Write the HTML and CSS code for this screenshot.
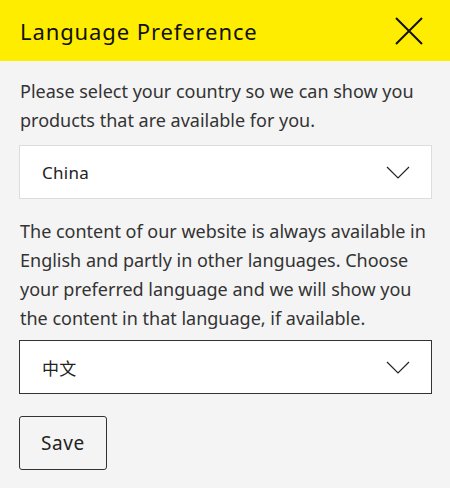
FILE: index.html
```html
<html>

<head>
  <meta charset="UTF-8">
  <meta name="viewport" content="width=device-width, initial-scale=1">
  <title>Language Preference</title>
  <link rel="stylesheet" href="styles.css">
</head>

<body>

  <div class="Modal">
    <header class="Cabecalho">
      <h1>Language Preference</h1>
      <button class="Fechar" title="Close">
        <svg width="28" height="28" viewBox="0 0 28 28">
          <path d="M1 1 L27 27 M27 1 L1 27" stroke="#111111" stroke-width="2" fill="none" />
        </svg>
      </button>
    </header>

    <div class="Conteudo">
      <p class="texto1">Please select your country so we can show you products that are available for you.</p>

      <div class="Seletor claro">
        <span>China</span>
        <svg width="24" height="13" viewBox="0 0 24 13">
          <path d="M1 1 L12 12 L23 1" stroke="#222222" stroke-width="1.2" fill="none" />
        </svg>
      </div>

      <p class="texto2">The content of our website is always available in English and partly in other languages. Choose your preferred language and we will show you the content in that language, if available.</p>

      <div class="Seletor escuro">
        <span>中文</span>
        <svg width="24" height="13" viewBox="0 0 24 13">
          <path d="M1 1 L12 12 L23 1" stroke="#222222" stroke-width="1.2" fill="none" />
        </svg>
      </div>

      <button class="Salvar">Save</button>
    </div>
  </div>

</body>

</html>
```

FILE: styles.css
```css
body {
  margin: 0;
  padding: 0;
  background: #f4f4f4;
  font-family: "Noto Sans", "Noto Sans CJK SC", sans-serif;
  color: #222222;
}

.Cabecalho {
  display: flex;
  align-items: center;
  justify-content: space-between;
  height: 61px;
  padding: 0 27px 0 20px;
  background: #ffed00;
}

h1 {
  margin: 0;
  font-size: 22px;
  font-weight: normal;
  letter-spacing: 0.9px;
  color: #111111;
}

.Fechar {
  display: flex;
  padding: 0;
  border: none;
  background: none;
}

.Conteudo {
  padding: 16px 18px 0 19px;
}

p {
  margin: 0 0 0 1px;
  font-size: 18px;
  line-height: 29px;
  color: #333333;
}

.texto1 {
  margin-bottom: 10px;
}

.texto2 {
  margin-top: 18px;
  margin-bottom: 7px;
}

.Seletor {
  display: flex;
  align-items: center;
  justify-content: space-between;
  height: 54px;
  box-sizing: border-box;
  padding: 0 21px 0 22px;
  background: #ffffff;
  font-size: 17px;
  letter-spacing: 0.3px;
}

.claro {
  border: 1px solid #dcdcdc;
}

.escuro {
  border: 1px solid #333333;
}

.Salvar {
  margin-top: 22px;
  width: 88px;
  height: 54px;
  border: 1px solid #333333;
  border-radius: 3px;
  background: none;
  font-family: "Noto Sans", sans-serif;
  font-size: 19px;
  letter-spacing: 0.6px;
  color: #222222;
}
```
